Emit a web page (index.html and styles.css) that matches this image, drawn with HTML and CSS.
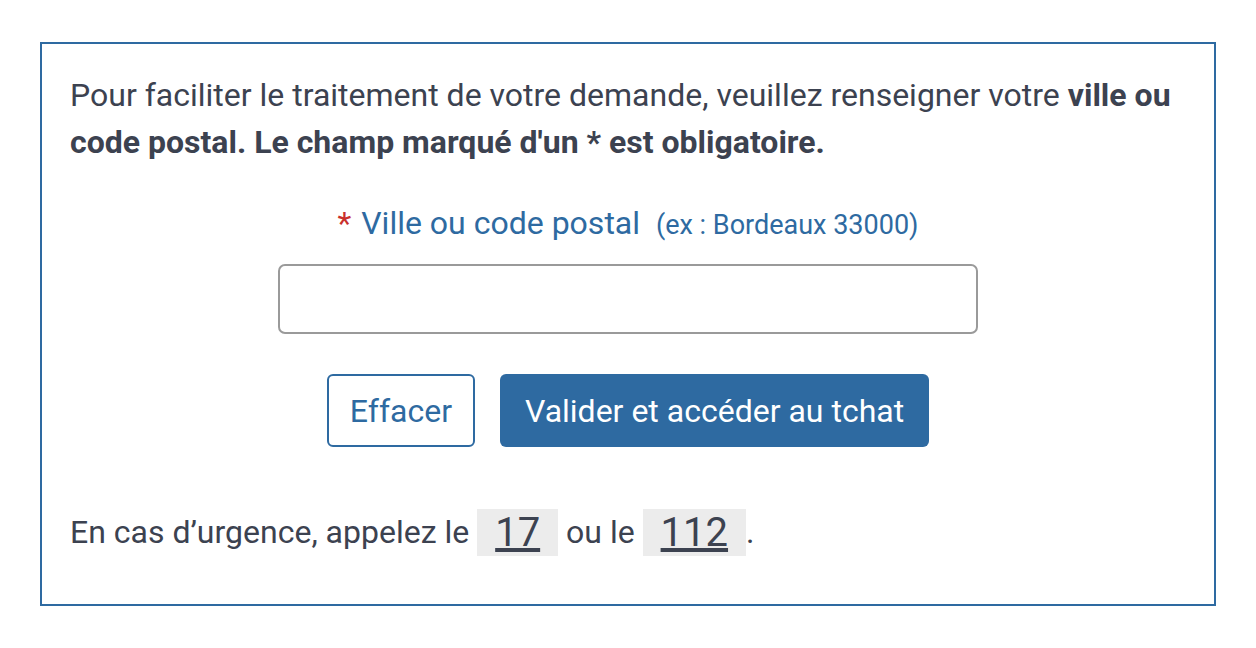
FILE: index.html
```html
<!DOCTYPE html>
<html lang="fr">

<head>
  <meta charset="UTF-8" />
  <meta name="viewport" content="width=device-width, initial-scale=1.0" />
  <title>Tchat</title>
  <link rel="stylesheet" href="styles.css">
</head>

<body>
  <div class="box">
    <p class="intro">
      Pour faciliter le traitement de votre demande, veuillez renseigner votre <strong>ville ou
      code postal. Le champ marqué d'un * est obligatoire.</strong>
    </p>

    <form class="form">
      <label class="label" for="ville">
        <span class="req">*</span> Ville ou code postal <span class="hint">(ex : Bordeaux 33000)</span>
      </label>
      <input class="field" id="ville" type="text" />

      <div class="actions">
        <button type="reset" class="btn btn-outline">Effacer</button>
        <button type="button" class="btn btn-primary">Valider et accéder au tchat</button>
      </div>
    </form>

    <p class="urgence">
      En cas d’urgence, appelez le <a class="num" href="#">17</a> ou le <a class="num" href="#">112</a>.
    </p>
  </div>
</body>

</html>
```

FILE: styles.css
```css
body {
  font-family: Roboto, 'Liberation Sans', sans-serif;
  color: #3c4250;
  margin: 0;
  background: #fff;
}

.box {
  margin: 42px 40px 0;
  border: 2px solid #2e6aa1;
  padding: 28px 28px 48px;
  width: 1176px;
  box-sizing: border-box;
  font-size: 32px;
  line-height: 47px;
}

.intro {
  margin: 0;
}

.intro strong {
  font-weight: 700;
}

.form {
  display: flex;
  flex-direction: column;
  align-items: center;
  margin-top: 34px;
}

.label {
  color: #2e6aa1;
  font-size: 32px;
  line-height: 46px;
}

.req {
  color: #c9302c;
  margin-right: 2px;
}

.hint {
  font-size: 27px;
  margin-left: 8px;
}

.field {
  margin-top: 16px;
  width: 700px;
  height: 70px;
  box-sizing: border-box;
  border: 2px solid #9a9a9a;
  border-radius: 7px;
  font-family: inherit;
  font-size: 30px;
  padding: 0 16px;
}

.actions {
  display: flex;
  gap: 25px;
  margin-top: 40px;
}

.btn {
  font-family: inherit;
  font-size: 32px;
  height: 73px;
  border-radius: 6px;
  padding: 0 25px;
  cursor: pointer;
}

.btn-outline {
  background: #fff;
  color: #2e6aa1;
  border: 2px solid #2e6aa1;
  padding: 0 21px;
}

.btn-primary {
  background: #2e6aa1;
  color: #fff;
  border: none;
}

.urgence {
  margin: 62px 0 0;
}

.num {
  display: inline-block;
  background: #ececec;
  color: #3c4250;
  font-size: 40px;
  line-height: 47px;
  padding: 0 18px;
  vertical-align: top;
}
```
